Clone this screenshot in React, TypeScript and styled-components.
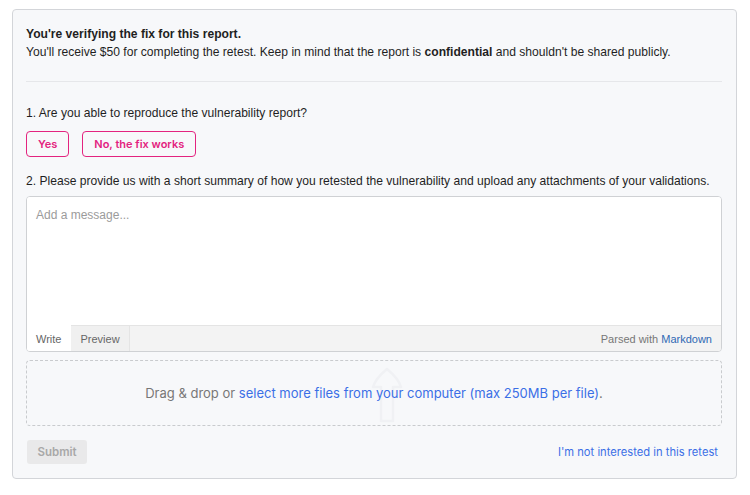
import React, { useState } from 'react';
import styled, { createGlobalStyle } from 'styled-components';

const GlobalStyle = createGlobalStyle`
  body {
    margin: 0;
    background: #ffffff;
    font-family: "Liberation Sans", Arial, sans-serif;
    color: #1f1f1f;
  }
`;

const Page = styled.div`
  padding: 9px 13px 0 12px;
`;

const Card = styled.div`
  background: #f7f8fa;
  border: 1px solid #d3d5d9;
  border-radius: 4px;
  padding: 14px 14px 14px 13px;
  height: 470px;
  box-sizing: border-box;
  display: flex;
  flex-direction: column;
`;

const Intro = styled.div`
  font-size: 12.1px;
  line-height: 18px;
  padding-top: 1px;
`;

const IntroTitle = styled.div`
  font-weight: bold;
`;

const Divider = styled.hr`
  border: none;
  border-top: 1px solid #e6e7ea;
  margin: 20px 0 0 0;
`;

const Question = styled.div<{ $top: number }>`
  font-size: 12.1px;
  line-height: 18px;
  margin-top: ${p => p.$top}px;
`;

const Choices = styled.div`
  display: flex;
  gap: 13px;
  margin-top: 9px;
`;

const ChoiceButton = styled.button<{ $active?: boolean }>`
  height: 26px;
  padding: 0 11px;
  border: 1px solid #e3237f;
  border-radius: 4px;
  background: ${p => (p.$active ? '#e3237f' : 'transparent')};
  color: ${p => (p.$active ? '#fff' : '#e3237f')};
  font-family: Inter, "Noto Sans", sans-serif;
  font-size: 11px;
  font-weight: 600;
  cursor: pointer;
`;

const Editor = styled.div`
  margin-top: 6px;
  background: #fff;
  border: 1px solid #cfd1d4;
  border-radius: 4px;
  overflow: hidden;
  display: flex;
  flex-direction: column;
`;

const MessageInput = styled.textarea`
  height: 128px;
  border: none;
  resize: none;
  padding: 11px 9px;
  box-sizing: border-box;
  font-family: "Liberation Sans", Arial, sans-serif;
  font-size: 12px;
  color: #333;
  outline: none;

  &::placeholder {
    color: #9b9b9b;
  }
`;

const EditorFooter = styled.div`
  display: flex;
  align-items: stretch;
  height: 26px;
  background: #f3f3f3;
`;

const Tab = styled.div<{ $active?: boolean }>`
  display: flex;
  align-items: center;
  padding: 0 9px;
  font-size: 11px;
  color: #666;
  background: ${p => (p.$active ? '#fff' : '#f0f0f0')};
  border-top: 1px solid ${p => (p.$active ? '#fff' : '#e4e4e4')};
  border-right: 1px solid ${p => (p.$active ? 'transparent' : '#e4e4e4')};
`;

const FooterFill = styled.div`
  flex: 1;
  display: flex;
  align-items: center;
  justify-content: flex-end;
  padding-right: 9px;
  border-top: 1px solid #e4e4e4;
  font-size: 11px;
  color: #777;
`;

const MarkdownLink = styled.a`
  color: #2f69b3;
  text-decoration: none;
  margin-left: 3px;
`;

const DropZone = styled.div`
  position: relative;
  margin-top: 8px;
  height: 64px;
  border: 1px dashed #c9cbce;
  border-radius: 4px;
  display: flex;
  align-items: center;
  justify-content: center;
  font-family: Inter, "Noto Sans", sans-serif;
  font-size: 13px;
  color: #777;
  overflow: hidden;
`;

const UploadGhost = styled.svg`
  position: absolute;
  left: 342px;
  top: 4px;
`;

const DropText = styled.span`
  position: relative;
`;

const SelectLink = styled.a`
  color: #3b6fe6;
  text-decoration: none;
`;

const Actions = styled.div`
  margin-top: auto;
  display: flex;
  align-items: center;
  justify-content: space-between;
`;

const SubmitButton = styled.button`
  height: 24px;
  width: 60px;
  padding: 0;
  border: none;
  border-radius: 3px;
  background: #e9e9ea;
  color: #a8a8a8;
  font-family: Inter, "Noto Sans", sans-serif;
  font-size: 11.5px;
  font-weight: 600;
  margin-left: 1px;
`;

const DeclineLink = styled.a`
  color: #3b6fe6;
  font-family: Inter, "Noto Sans", sans-serif;
  font-size: 11.2px;
  text-decoration: none;
  margin-right: 4px;
`;

export default function App() {
  const [answer, setAnswer] = useState<string | null>(null);
  const [message, setMessage] = useState('');

  return (
    <>
      <GlobalStyle />
      <Page>
        <Card>
          <Intro>
            <IntroTitle>You're verifying the fix for this report.</IntroTitle>
            <div>
              You'll receive $50 for completing the retest. Keep in mind that the report is{' '}
              <b>confidential</b> and shouldn't be shared publicly.
            </div>
          </Intro>
          <Divider />
          <Question $top={22}>1. Are you able to reproduce the vulnerability report?</Question>
          <Choices>
            <ChoiceButton $active={answer === 'yes'} onClick={() => setAnswer('yes')}>
              Yes
            </ChoiceButton>
            <ChoiceButton $active={answer === 'no'} onClick={() => setAnswer('no')}>
              No, the fix works
            </ChoiceButton>
          </Choices>
          <Question $top={15}>
            2. Please provide us with a short summary of how you retested the vulnerability and upload any attachments of your validations.
          </Question>
          <Editor>
            <MessageInput
              placeholder="Add a message..."
              value={message}
              onChange={e => setMessage(e.target.value)}
            />
            <EditorFooter>
              <Tab $active>Write</Tab>
              <Tab>Preview</Tab>
              <FooterFill>
                Parsed with <MarkdownLink href="#">Markdown</MarkdownLink>
              </FooterFill>
            </EditorFooter>
          </Editor>
          <DropZone>
            <UploadGhost width="36" height="60" viewBox="0 0 36 60" fill="none">
              <path
                d="M18 4 C12 9 6 15 4 22 L12 22 L12 56 L24 56 L24 22 L32 22 C30 15 24 9 18 4 Z"
                stroke="#f0f1f4"
                strokeWidth="2.5"
                strokeLinejoin="round"
              />
            </UploadGhost>
            <DropText>
              Drag &amp; drop or{' '}
              <SelectLink href="#">select more files from your computer (max 250MB per file)</SelectLink>.
            </DropText>
          </DropZone>
          <Actions>
            <SubmitButton disabled>Submit</SubmitButton>
            <DeclineLink href="#">I'm not interested in this retest</DeclineLink>
          </Actions>
        </Card>
      </Page>
    </>
  );
}
